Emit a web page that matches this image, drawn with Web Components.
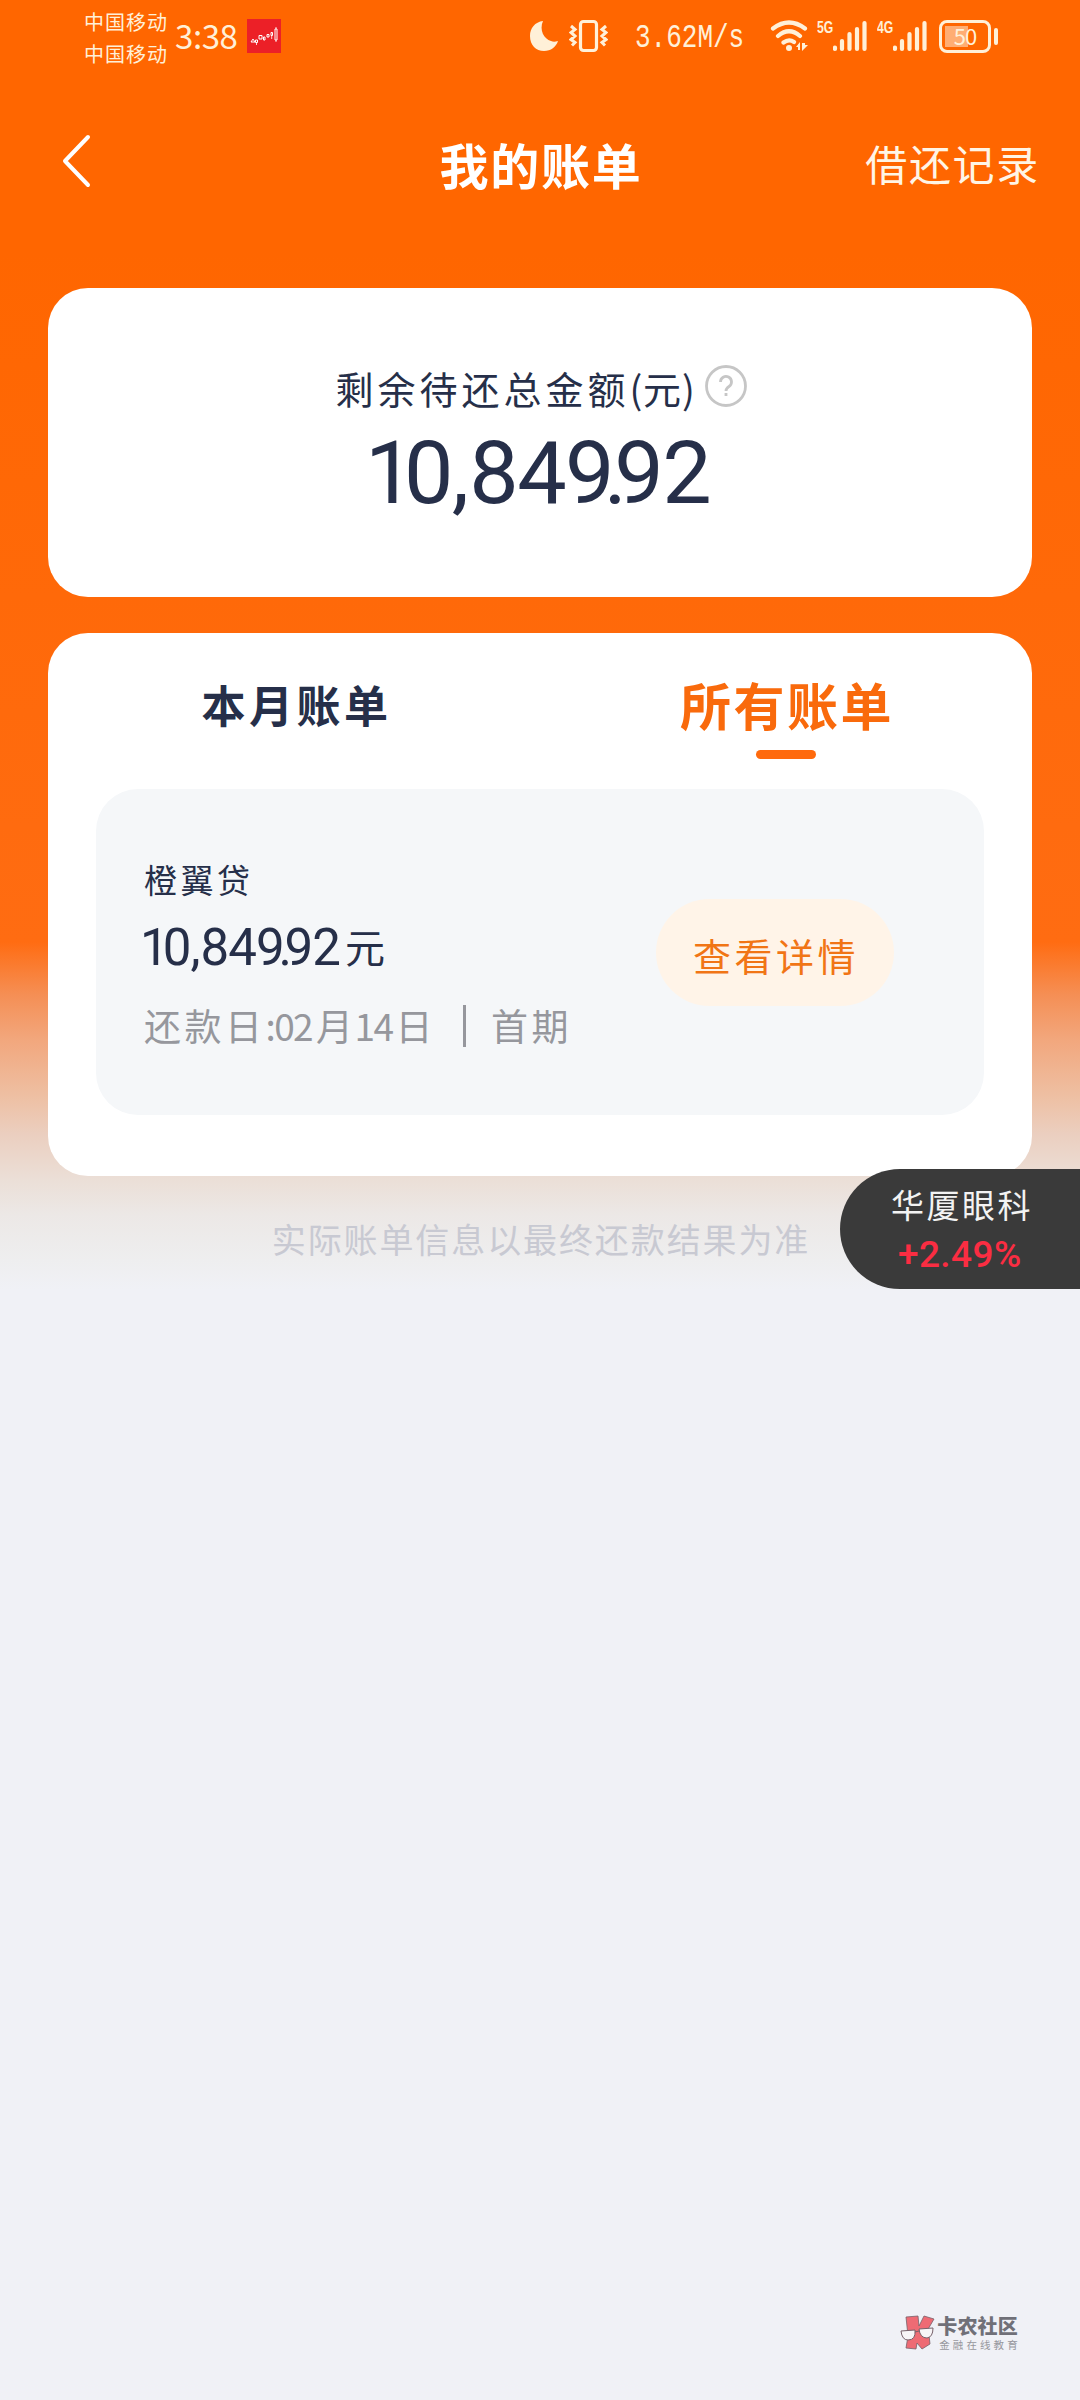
<!DOCTYPE html>
<html lang="zh-CN">
<head>
<meta charset="utf-8">
<title>我的账单</title>
<style>
html,body{margin:0;padding:0}
body{width:1080px;height:2400px;overflow:hidden;font-family:"Noto Sans CJK SC",sans-serif;color:#262f49}
</style>
</head>
<body>
<bill-page></bill-page>
<script>
const define = (name, html) => {
  const t = document.createElement('template');
  t.innerHTML = html;
  customElements.define(name, class extends HTMLElement {
    constructor() {
      super();
      this.attachShadow({ mode: 'open' }).appendChild(t.content.cloneNode(true));
    }
  });
};

define('bill-amount', `
<style>
:host{display:block;font-family:Roboto,sans-serif;font-weight:400;letter-spacing:-.018em;white-space:nowrap}
.one{margin-right:-.1em}
.comma{margin-right:.02em}
.dot{margin:0 -.125em 0 -.105em}
</style><span class="one">1</span>0<span class="comma">,</span>849<span class="dot">.</span>92`);

define('status-bar', `
<style>
:host{display:flex;height:74px;box-sizing:border-box;padding-left:84px;color:#fff0d8}
.carriers{width:91px;padding-top:6px;font-size:20px;letter-spacing:1px;line-height:32px;white-space:nowrap}
.time{width:72px;font-size:33px;line-height:71px;letter-spacing:-.4px;white-space:nowrap}
svg{display:block;flex:none}
.app{margin-top:19px;width:34px;height:34px}
.moon{margin:20px 0 0 249px}
.vib{margin:19px 0 0 10px}
.speed{margin-left:27px;width:135px;font:26px/76px "Liberation Mono",monospace;transform:scaleY(1.28);white-space:nowrap}
.wifi{margin-top:19px}
.net{font:bold 17px/20px "Liberation Sans",sans-serif;transform:scaleX(.72);transform-origin:0 0;margin:18px 0 0 9px;width:16px;white-space:nowrap}
.net.b{margin-left:10px}
.bars{margin-top:20px}
.bat{margin:20px 0 0 12px;width:52px;height:33px;box-sizing:border-box;border:3px solid #fff0d8;border-radius:8px;display:flex;align-items:center;justify-content:center;font-size:22px;letter-spacing:-1px;line-height:23px;padding-bottom:3px;background:linear-gradient(90deg,#ffad73 0 23px,transparent 23px) 3px 3px/40px 21px no-repeat}
.tip{margin:28px 0 0 3px;width:4px;height:17px;border-radius:2px;background:#fff0d8}
</style>
<div class="carriers"><div>中国移动</div><div>中国移动</div></div>
<div class="time">3:38</div>
<svg class="app" viewBox="0 0 34 34"><rect width="34" height="34" fill="#ec2027"/><path d="M4 23l2-3 2 3zM8.500 21h2v2.500h-2zM12 16.500h3v3.500h-3zM16.500 18h1.500v3h-1.500zM20 15.500h2v2.500h-2zM24 13.500h1.500v3h-1.500zM28 10h2v11h-2z" fill="none" stroke="#fff" stroke-width="1"/><path d="M29 8v2M29 21v2M9.500 24v2M24.700 17v3" stroke="#fff" stroke-width=".8"/></svg>
<svg class="moon" width="29" height="32" viewBox="0 0 29 32"><path d="M13 1C5 2 0 8 0 16c0 9 6 15 14 15 7 0 12-4 14-10-3 1-5 1-7 0C14 19 9 10 13 1z" fill="#fff0d8"/></svg>
<svg class="vib" width="39" height="34" viewBox="0 0 39 34" fill="none" stroke="#fff0d8"><rect x="11.500" y="2.500" width="16" height="29" rx="3" stroke-width="3.200"/><path d="M2 7l4 3.500-4 3 4 3.500-4 3.500 4 3-3 3M37 7l-4 3.500 4 3-4 3.500 4 3.500-4 3 3 3" stroke-width="3"/></svg>
<div class="speed">3.62M/s</div>
<svg class="wifi" width="38" height="34" viewBox="0 0 38 34" fill="none" stroke="#fff0d8" stroke-width="4.200" stroke-linecap="round"><path d="M3 9.500Q19-2.500 35 9.500M8 17Q19 7.500 30 17M13.500 23.500Q19 19.500 24 23"/><circle cx="19" cy="29" r="3" fill="#fff0d8" stroke="none"/><path d="M26 28l4-5v8h-2v-3zM32 24v8l6-6h-3v-2z" fill="#fff0d8" stroke="none"/></svg>
<div class="net">5G</div>
<svg class="bars" width="34" height="33" viewBox="0 0 34 33" stroke="#fff0d8" stroke-width="4.200" stroke-linecap="round"><path d="M2 27.500v1.500M9 21v8M16.500 14v15M24 9v20M31.500 3v26"/></svg>
<div class="net b">4G</div>
<svg class="bars" width="34" height="33" viewBox="0 0 34 33" stroke="#fff0d8" stroke-width="4.200" stroke-linecap="round"><path d="M2 27.500v1.500M9 21v8M16.500 14v15M24 9v20M31.500 3v26"/></svg>
<div class="bat">50</div><div class="tip"></div>`);

define('nav-bar', `
<style>
:host{display:grid;grid-template-columns:1fr auto 1fr;align-items:center;box-sizing:border-box;height:182px;padding:0 42px 6px 42px;color:#fff}
svg{display:block;margin:-2px 0 0 18px}
.t{font-size:49px;font-weight:700;letter-spacing:1.800px;margin:2px 0 0 2px}
.r{justify-self:end;font-size:42px;letter-spacing:1.700px;color:#fff5e6;margin-right:-2px}
</style>
<svg width="34" height="54" viewBox="0 0 34 54"><path d="M28 3L5 27l23 24" fill="none" stroke="#fff" stroke-width="4" stroke-linecap="round" stroke-linejoin="round"/></svg>
<div class="t"><slot></slot></div>
<div class="r"><slot name="action"></slot></div>`);

define('total-card', `
<style>
:host{display:flex;flex-direction:column;align-items:center;box-sizing:border-box;height:309px;margin:32px 48px 0;padding-top:69px;background:#fff;border-radius:40px}
.l{display:flex;align-items:center;height:60px;font-size:38px;letter-spacing:4px;white-space:nowrap;gap:9px;margin-left:2px}
.l span{display:block}
i{font-style:normal;letter-spacing:.8px}
svg{display:block;margin-top:-3px}
bill-amount{font-size:88px;line-height:106px;margin:3px 0 0 -5px}
</style>
<div class="l"><span>剩余待还总金额<i>(元)</i></span>
<svg width="42" height="42" viewBox="0 0 42 42" fill="none" stroke="#c6c6c6" stroke-width="2.800"><circle cx="21" cy="21" r="19.500"/><path d="M15.500 17a5.500 5.500 0 1 1 8.500 4.500q-3 2-3 4.500"/><path d="M21 28v3"/></svg></div>
<bill-amount></bill-amount>`);

define('bill-tabs', `
<style>
:host{display:flex;height:156px;font-weight:700}
div{flex:1;display:flex;flex-direction:column;align-items:center;white-space:nowrap}
.m{font-size:44px;letter-spacing:3.500px;line-height:143px}
.c{font-size:51px;letter-spacing:2.500px;padding-right:2px;color:#f96a0c}
.m{padding-left:4px}
.c span{padding-top:14px;height:103px;line-height:115px;margin-left:3px}
.c b{width:60px;height:9px;border-radius:5px;background:#ff6a0d}
</style>
<div class="m">本月账单</div><div class="c"><span>所有账单</span><b></b></div>`);

define('bill-item', `
<style>
:host{display:flex;box-sizing:border-box;height:326px;margin:0 48px;padding:65px 90px 0 48px;background:#f5f7f9;border-radius:42px;justify-content:space-between}
.n{font-size:33px;letter-spacing:3.500px;line-height:50px}
.a{display:flex;align-items:center;height:84px;font-size:40px;line-height:78px;white-space:nowrap}
bill-amount{font-size:51px;line-height:84px;margin:3px 5px 0 -4px}
.d{display:flex;align-items:center;height:48px;margin-top:14px;font-size:37px;letter-spacing:3.500px;color:#96979d;white-space:nowrap}
.d i{font-style:normal;letter-spacing:-1.600px}
.d b{width:3px;height:42px;background:#96979d;margin:0 25px 0 27px}
.d span{margin-top:-2px}
button{all:unset;width:238px;height:107px;margin-top:45px;border-radius:54px;background:#fff4e8;color:#f17515;font-size:38px;letter-spacing:3.500px;text-align:center;text-indent:2px;line-height:111px}
</style>
<div><div class="n">橙翼贷</div><div class="a"><bill-amount></bill-amount>元</div>
<div class="d"><span>还款日<i>:02</i></span><span style="margin-left:4px">月</span><span style="margin-left:-2px"><i>14</i></span><span style="margin-left:3px">日</span><b></b><span>首期</span></div></div>
<button>查看详情</button>`);

define('bills-card', `
<style>:host{display:block;box-sizing:border-box;height:543px;margin:36px 48px 0;background:#fff;border-radius:40px}</style>
<slot></slot>`);

define('stock-float', `
<style>
:host{position:absolute;left:840px;top:1169px;width:240px;height:120px;box-sizing:border-box;padding:10px 0 0 51px;border-radius:60px 0 0 60px;background:#3a3a3a;color:#f3f3f3;font-size:33px;letter-spacing:2.500px;line-height:50px;white-space:nowrap}
.p{font:500 37px/50px Roboto,sans-serif;color:#fa2d42;letter-spacing:.4px;margin:1px 0 0 7px}
</style>
<div>华厦眼科</div><div class="p">+2.49%</div>`);

define('site-mark', `
<style>
:host{display:flex;margin:auto 62px 48px auto;color:#707078;white-space:nowrap}
svg{display:block;margin:1px 2px 0 0}
.t{font-size:20px;font-weight:900;line-height:24px;letter-spacing:.2px}
.s{font-size:10.500px;line-height:13px;letter-spacing:3.100px;color:#96979d;padding-left:2px;margin-right:-3px}
</style>
<svg width="35" height="37" viewBox="0 0 35 37"><path d="M6 2l12-1 1 10 5-10 10 3-7 12 2 4 1 9-8 5-5-6-1 6-10-1 2-12z" fill="#ee6b74" stroke="#76616a" stroke-width=".8"/><path d="M1 16l14-1q1 10-7 10-6 0-7-9zM19 14l14-1q0 9-6 10-7 0-8-9z" fill="#f7f5f7" stroke="#76616a"/><path d="M15 17l4-1" stroke="#76616a"/></svg>
<div><div class="t">卡农社区</div><div class="s">金融在线教育</div></div>`);

define('bill-page', `
<style>
:host{display:flex;flex-direction:column;position:relative;width:1080px;height:2400px;background:linear-gradient(#ff6600 0,#ff6600 250px,#ff6c12 942px,#f58f55 995px,#f2a77d 1040px,#eebfa2 1095px,#ebcfc0 1135px,#ebdfd7 1180px,#ece8e6 1215px,#eeeeef 1260px,#f0f1f6 1290px)}
.note{text-align:center;font-size:34px;letter-spacing:1.900px;line-height:50px;margin-top:38px;margin-left:2px;color:#c8c9d2}
</style>
<status-bar></status-bar>
<nav-bar>我的账单<span slot="action">借还记录</span></nav-bar>
<total-card></total-card>
<bills-card><bill-tabs></bill-tabs><bill-item></bill-item></bills-card>
<div class="note">实际账单信息以最终还款结果为准</div>
<site-mark></site-mark>
<stock-float></stock-float>`);
</script>
</body>
</html>
